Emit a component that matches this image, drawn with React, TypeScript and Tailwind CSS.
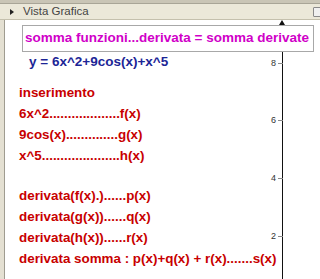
const ticks = [
  { label: "8", top: 43 },
  { label: "6", top: 100 },
  { label: "4", top: 158 },
  { label: "2", top: 216 },
];

const inputs = [
  "6x^2...................f(x)",
  "9cos(x)..............g(x)",
  "x^5.....................h(x)",
];

const derivs = [
  "derivata(f(x).)......p(x)",
  "derivata(g(x))......q(x)",
  "derivata(h(x))......r(x)",
  "derivata somma : p(x)+q(x) + r(x).......s(x)",
];

const App = () => {
  return (
    <div
      className="w-[320px] h-[279px] overflow-hidden bg-white flex flex-col"
      style={{ fontFamily: '"Liberation Sans", Arial, sans-serif' }}
    >
      <div className="h-[4px] bg-[#c9c5b6] border-b border-[#a8a597]" />
      <div className="h-[16px] bg-[#ebe8d9] border-b border-[#c4c0ad] flex items-center">
        <span className="ml-[10px] w-0 h-0 border-y-[3.5px] border-y-transparent border-l-[4px] border-l-[#222]" />
        <span className="ml-[9px] text-[11.5px] text-[#444]">Vista Grafica</span>
        <span className="ml-auto mr-[-2px] w-[9px] h-[10px] border border-[#8a8a8a] bg-[#f0f0f0] rounded-[1px]" />
      </div>
      <div className="flex flex-1">
        <div className="w-[5px] bg-[#e4e0d2] border-r border-[#9f9c90]" />
        <div className="relative flex-1 font-bold">
          <div className="absolute left-[277px] top-[2px] bottom-0 w-px bg-[#111]" />
          <div className="absolute left-[274px] top-0 w-0 h-0 border-x-[3.5px] border-x-transparent border-b-[5px] border-b-[#111]" />
          {ticks.map((t) => (
            <div
              key={t.label}
              className="absolute left-[266px] flex items-center font-normal"
              style={{ top: t.top - 6 }}
            >
              <span className="text-[9px] leading-[12px] text-[#333]">{t.label}</span>
              <span className="ml-[2px] w-[5px] h-px bg-[#888]" />
            </div>
          ))}
          <div className="relative ml-[17px] mt-[5px] w-[292px] h-[27px] border border-[#a8a8a8] bg-white flex items-center pl-[2px]">
            <span className="text-[13.5px] text-[#d000c8] whitespace-nowrap">
              somma funzioni...derivata = somma derivate
            </span>
          </div>
          <div className="relative ml-[24px] h-[20px] leading-[20px] text-[13.5px] text-[#1c2596]">
            y = 6x^2+9cos(x)+x^5
          </div>
          <div className="relative ml-[14px] mt-[10px] text-[13.4px] leading-[21px] text-[#c80000] whitespace-nowrap">
            <div>inserimento</div>
            {inputs.map((l) => (
              <div key={l}>{l}</div>
            ))}
          </div>
          <div className="relative ml-[14px] mt-[19px] text-[13.4px] leading-[21px] text-[#c80000] whitespace-nowrap">
            {derivs.map((l) => (
              <div key={l}>{l}</div>
            ))}
          </div>
        </div>
      </div>
    </div>
  );
};

export default App;
